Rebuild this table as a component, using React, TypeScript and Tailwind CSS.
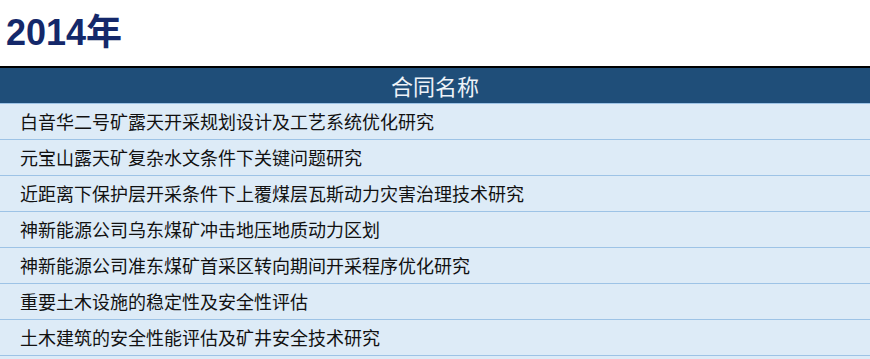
import React from "react";

// Contract list for the year
const contracts = [
  "白音华二号矿露天开采规划设计及工艺系统优化研究",
  "元宝山露天矿复杂水文条件下关键问题研究",
  "近距离下保护层开采条件下上覆煤层瓦斯动力灾害治理技术研究",
  "神新能源公司乌东煤矿冲击地压地质动力区划",
  "神新能源公司准东煤矿首采区转向期间开采程序优化研究",
  "重要土木设施的稳定性及安全性评估",
  "土木建筑的安全性能评估及矿井安全技术研究",
];

const App: React.FC = () => {
  return (
    <div className="w-[870px] h-[359px] overflow-hidden bg-white font-['Liberation_Sans','Noto_Sans_CJK_SC',sans-serif]">
      <h1 className="h-[66px] pt-[15px] pl-[6px] text-[36px] leading-[36px] font-bold text-[#14286a]">
        2014年
      </h1>
      <div className="w-full">
        <div className="h-[37px] border-t-2 border-black bg-[#1f4e79] flex items-center justify-center text-[22px] text-[#eef3f8] font-['Noto_Sans_CJK_SC',sans-serif]">
          合同名称
        </div>
        {contracts.map((name) => (
          <div
            key={name}
            className="h-[36px] border-t border-[#9dc3e6] bg-[#ddebf7] flex items-center pl-[20px] text-[18px] text-[#111111] font-['Noto_Sans_CJK_SC',sans-serif]"
          >
            {name}
          </div>
        ))}
        <div className="h-[4px] border-t border-[#9dc3e6] bg-[#ddebf7]" />
      </div>
    </div>
  );
};

export default App;
